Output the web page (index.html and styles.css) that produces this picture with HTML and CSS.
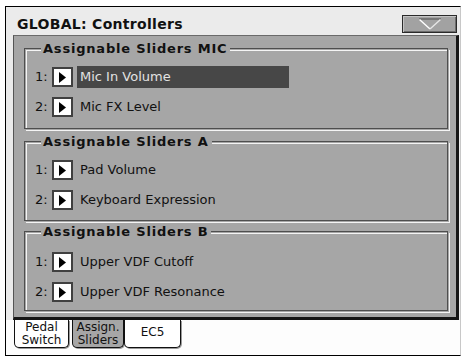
FILE: index.html
```html
<!DOCTYPE html>
<html>
<head>
<meta charset="utf-8">
<link rel="stylesheet" href="styles.css">
</head>
<body>
<div class="screen">
  <div class="titlebar">
    <span class="title">GLOBAL: Controllers</span>
    <div class="dd">
      <svg width="24" height="12" viewBox="0 0 24 12">
        <line x1="1" y1="1" x2="23" y2="1" stroke="#5a5a5a" stroke-width="1.2"/>
        <line x1="1.5" y1="1.5" x2="12" y2="11" stroke="#ffffff" stroke-width="1.4"/>
        <line x1="22.5" y1="1.5" x2="12" y2="11" stroke="#e6e6e6" stroke-width="1.4"/>
      </svg>
    </div>
  </div>
  <div class="panel">
    <div class="group g-mic">
      <div class="legend">Assignable Sliders MIC</div>
      <div class="rows">
        <div class="row"><span class="num">1:</span><span class="arrow"><svg width="7" height="11" viewBox="0 0 7 11"><polygon points="0,0 7,5.5 0,11" fill="#000"/></svg></span><span class="val sel">Mic In Volume</span></div>
        <div class="row"><span class="num">2:</span><span class="arrow"><svg width="7" height="11" viewBox="0 0 7 11"><polygon points="0,0 7,5.5 0,11" fill="#000"/></svg></span><span class="val">Mic FX Level</span></div>
      </div>
    </div>
    <div class="group g-a">
      <div class="legend">Assignable Sliders A</div>
      <div class="rows">
        <div class="row"><span class="num">1:</span><span class="arrow"><svg width="7" height="11" viewBox="0 0 7 11"><polygon points="0,0 7,5.5 0,11" fill="#000"/></svg></span><span class="val">Pad Volume</span></div>
        <div class="row"><span class="num">2:</span><span class="arrow"><svg width="7" height="11" viewBox="0 0 7 11"><polygon points="0,0 7,5.5 0,11" fill="#000"/></svg></span><span class="val">Keyboard Expression</span></div>
      </div>
    </div>
    <div class="group g-b">
      <div class="legend">Assignable Sliders B</div>
      <div class="rows">
        <div class="row"><span class="num">1:</span><span class="arrow"><svg width="7" height="11" viewBox="0 0 7 11"><polygon points="0,0 7,5.5 0,11" fill="#000"/></svg></span><span class="val">Upper VDF Cutoff</span></div>
        <div class="row"><span class="num">2:</span><span class="arrow"><svg width="7" height="11" viewBox="0 0 7 11"><polygon points="0,0 7,5.5 0,11" fill="#000"/></svg></span><span class="val">Upper VDF Resonance</span></div>
      </div>
    </div>
  </div>
  <div class="tabs">
    <div class="tab t-pedal">Pedal<br>Switch</div>
    <div class="tab t-assign active">Assign.<br>Sliders</div>
    <div class="tab t-ec5">EC5</div>
  </div>
</div>
</body>
</html>
```
FILE: styles.css
```css
html, body {
  margin: 0;
  padding: 0;
  background: #ffffff;
}
body {
  width: 464px;
  height: 359px;
  overflow: hidden;
  font-family: "DejaVu Sans", "Liberation Sans", sans-serif;
  color: #111;
}
.screen {
  margin: 6px 0 0 5px;
  width: 454px;
  height: 348px;
  border: 1px solid #000;
  border-right-color: #c8c8c8;
  background: #ebebeb;
  display: flex;
  flex-direction: column;
}
.titlebar {
  height: 28px;
  flex: none;
  display: flex;
  align-items: flex-start;
  justify-content: space-between;
  padding: 0 3px 0 11px;
  box-sizing: border-box;
}
.title {
  margin-top: 9px;
  font-size: 14px;
  line-height: 16px;
  font-weight: bold;
  letter-spacing: 0.3px;
  color: #111;
}
.dd {
  margin-top: 8px;
  width: 55px;
  height: 18px;
  box-sizing: border-box;
  border: 1px solid #2a2a2a;
  background: #a2a2a2;
  box-shadow: inset 1px 1px 0 #c4c4c4, inset -1px -1px 0 #6c6c6c;
  display: flex;
  align-items: center;
  justify-content: center;
}
.panel {
  margin-left: 7px;
  width: 446px;
  height: 285px;
  flex: none;
  box-sizing: border-box;
  background: #a6a6a6;
  border-top: 1px solid #6a6a6a;
  border-left: 1px solid #555;
  border-right: 3px solid #151515;
  border-bottom: 3px solid #151515;
  padding: 12px 8px 0 10px;
}
.group {
  box-sizing: border-box;
  border: 1px solid #4e4e4e;
  box-shadow: inset 1px 1px 0 #a6a6a6, inset 2px 2px 0 #f4f4f4, 1px 1px 0 #a6a6a6, 2px 2px 0 #f4f4f4;
}
.g-mic { height: 81px; margin-bottom: 12px; }
.g-a { height: 80px; margin-bottom: 10px; }
.g-b { height: 80px; }
.legend {
  margin: -7px 0 0 16px;
  width: fit-content;
  padding: 0 3px 0 2px;
  background: #a6a6a6;
  font-size: 13px;
  line-height: 14px;
  font-weight: bold;
  letter-spacing: 0.8px;
  color: #111;
}
.rows {
  margin-top: 6px;
}
.g-b .rows {
  margin-top: 8px;
}
.row {
  height: 30px;
  display: flex;
  align-items: center;
  font-size: 13px;
}
.num {
  width: 17px;
  padding-left: 10px;
  line-height: 16px;
}
.arrow {
  width: 21px;
  height: 20px;
  box-sizing: border-box;
  border: 2px solid #404040;
  background: #fff;
  display: flex;
  align-items: center;
  padding-left: 5px;
}
.arrow svg {
  display: block;
}
.val {
  margin-left: 4px;
  padding: 0 3px;
  height: 22px;
  line-height: 22px;
  white-space: nowrap;
}
.val.sel {
  width: 212px;
  box-sizing: border-box;
  background: #474747;
  color: #e2e2e2;
}
.tabs {
  flex: 1;
  display: flex;
  align-items: flex-start;
  background: #fdfdfd;
  padding-left: 8px;
}
.tab {
  height: 28px;
  box-sizing: border-box;
  border: 1px solid #111;
  border-top: none;
  border-radius: 0 0 5px 5px;
  box-shadow: 1px 1px 0 #9a9a9a;
  background: #fff;
  text-align: center;
  font-size: 12px;
  line-height: 13px;
  padding-top: 1px;
}
.t-pedal { width: 55px; margin-right: 3px; }
.t-assign { width: 52px; margin-right: 0; }
.t-ec5 { width: 57px; padding-top: 6px; }
.tab.active {
  background: #a6a6a6;
}
```
